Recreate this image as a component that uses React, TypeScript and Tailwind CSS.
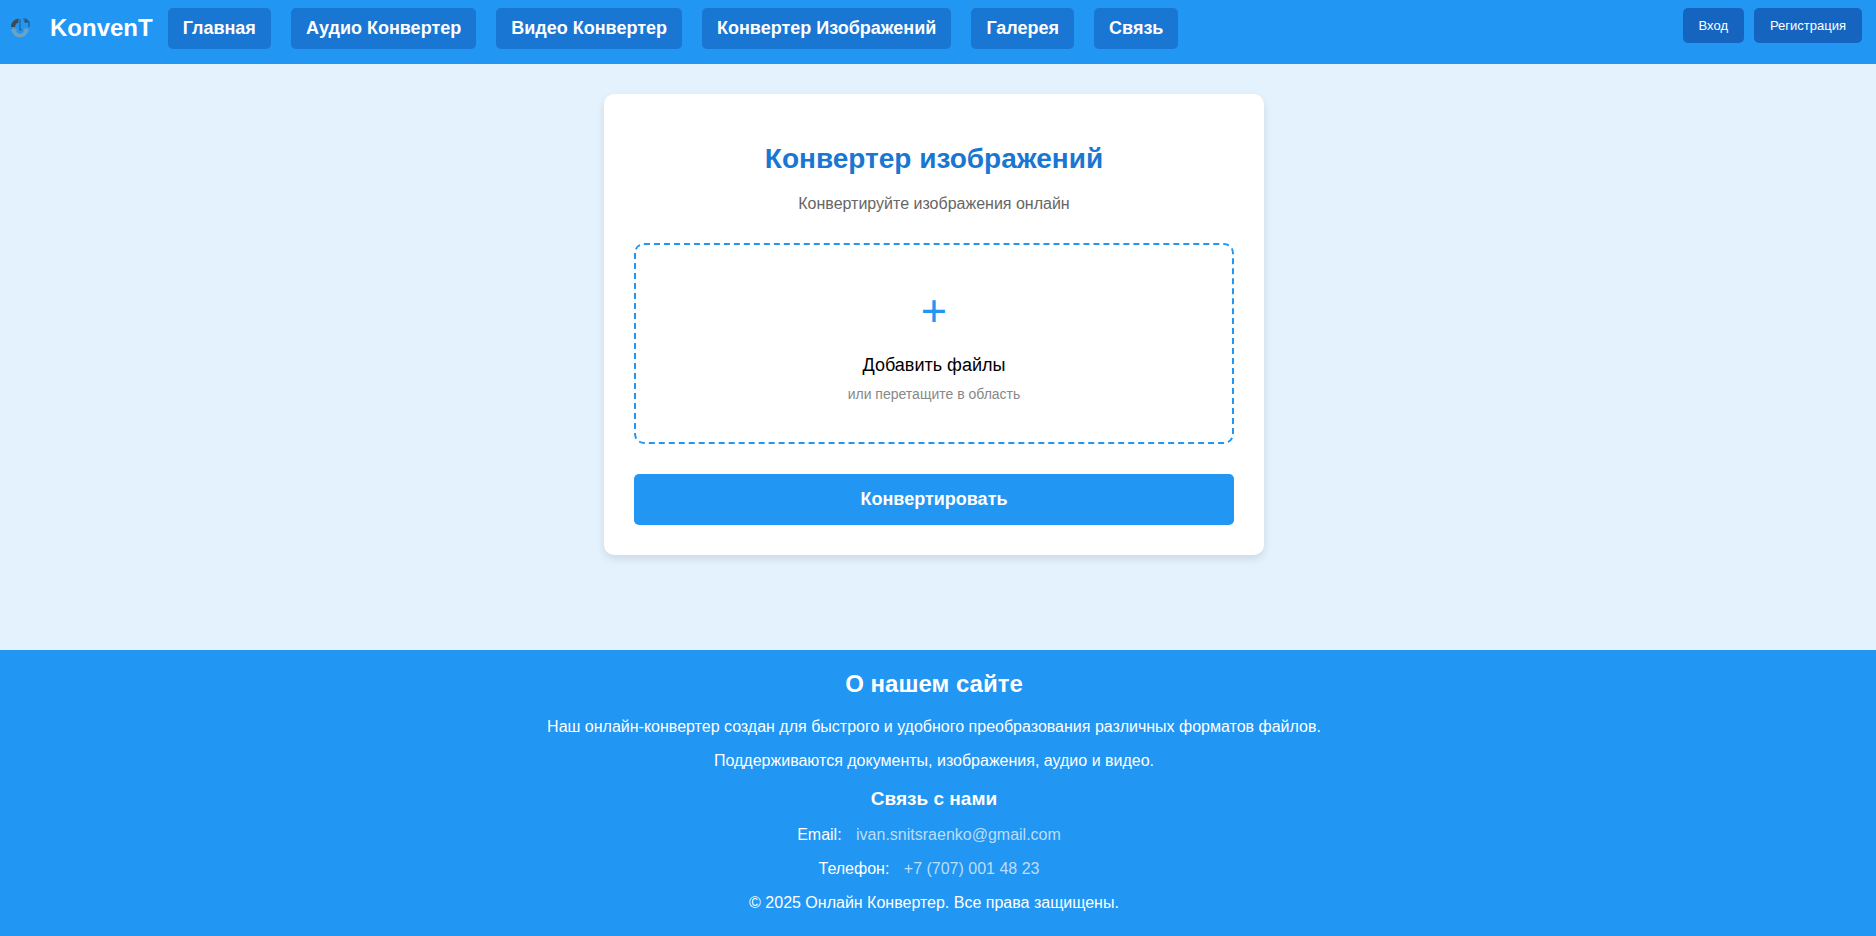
const navItems = [
  'Главная',
  'Аудио Конвертер',
  'Видео Конвертер',
  'Конвертер Изображений',
  'Галерея',
  'Связь',
];

function Logo() {
  return (
    <svg viewBox="0 0 20 20" className="size-5" aria-hidden="true">
      <path d="M1 9A8.500 8.500 0 0 1 8.500 0.500v4A5 5 0 0 0 5 9Z" fill="#44484d" />
      <path d="M10 1v11h2.500" fill="none" stroke="#27608c" strokeWidth="1.200" />
      <path d="M13 1h3l3 3V9" fill="none" stroke="#2d5877" strokeWidth="1.200" />
      <path d="M14.500 1v3.500h4Z" fill="#34495a" />
      <path d="M0 12.500l4-2.500 4 2.500H5.500a4.800 4.800 0 0 0 9 0H12l4-2.500 4 2.500H18.500a8.700 8.700 0 0 1-17 0Z" fill="#6ba3c4" />
      <path d="M4 17.200a9 9 0 0 0 12 0A8.500 8.500 0 0 1 4 17.200Z" fill="#7b98a9" />
    </svg>
  );
}

export default function App() {
  return (
    <div className="flex min-h-screen flex-col bg-[#e3f2fd] font-['Liberation_Sans',Arial,sans-serif] text-base leading-[18px] text-black">
      <header className="flex h-16 items-start justify-between bg-[#2196f3] pt-2 pr-3.5 pl-2.5">
        <div className="flex items-start">
          <a href="#" className="flex h-10 items-center gap-5 text-2xl font-bold text-white">
            <Logo />
            KonvenT
          </a>
          <nav className="ml-[15px] flex gap-5">
            {navItems.map((item) => (
              <a key={item} href="#" className="rounded-[5px] bg-[#1976d2] px-[15px] py-2.5 text-lg leading-[21px] font-bold whitespace-nowrap text-white">
                {item}
              </a>
            ))}
          </nav>
        </div>
        <div className="flex gap-2.5">
          <button className="rounded-[5px] bg-[#1565c0] px-4 py-2.5 text-[13px] leading-[15px] text-white">Вход</button>
          <button className="rounded-[5px] bg-[#1565c0] px-4 py-2.5 text-[13px] leading-[15px] text-white">Регистрация</button>
        </div>
      </header>

      <main className="flex grow justify-center pt-[30px] pr-2 pb-[95px]">
        <section className="flex w-full max-w-[660px] flex-col self-start rounded-[10px] bg-white p-[30px] text-center shadow-[0_4px_8px_rgba(0,0,0,0.1)]">
          <h1 className="mt-[19px] text-[28px] leading-8 font-bold text-[#1976d2]">Конвертер изображений</h1>
          <p className="mt-5 text-[#666]">Конвертируйте изображения онлайн</p>
          <label className="mt-[30px] flex cursor-pointer flex-col items-center rounded-[10px] border-2 border-dashed border-[#2196f3] p-10">
            <span className="text-[45px] leading-[52px] text-[#2196f3]">+</span>
            <span className="mt-[18px] text-lg leading-5">Добавить файлы</span>
            <span className="mt-[11px] text-sm leading-4 text-[#888]">или перетащите в область</span>
            <input type="file" multiple accept="image/*" className="sr-only" />
          </label>
          <button className="mt-[30px] rounded-[5px] bg-[#2196f3] py-[15px] text-lg leading-[21px] font-bold text-white">Конвертировать</button>
        </section>
      </main>

      <footer className="bg-[#2196f3] pt-5 pr-2 pb-6 text-center text-white">
        <h2 className="text-2xl leading-7 font-bold">О нашем сайте</h2>
        <p className="mt-5">Наш онлайн-конвертер создан для быстрого и удобного преобразования различных форматов файлов.</p>
        <p className="mt-4">Поддерживаются документы, изображения, аудио и видео.</p>
        <h3 className="mt-[18px] text-[19px] leading-[22px] font-bold">Связь с нами</h3>
        <p className="mt-4">
          Email: <a href="mailto:ivan.snitsraenko@gmail.com" className="mx-2.5 text-[#bbdefb]">ivan.snitsraenko@gmail.com</a>
        </p>
        <p className="mt-4">
          Телефон: <a href="tel:+77070014823" className="mx-2.5 text-[#bbdefb]">+7 (707) 001 48 23</a>
        </p>
        <p className="mt-4">© 2025 Онлайн Конвертер. Все права защищены.</p>
      </footer>
    </div>
  );
}
